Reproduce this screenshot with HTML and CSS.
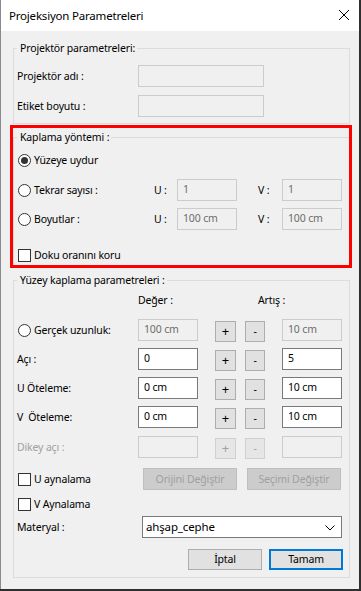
FILE: index.html
```html
<!DOCTYPE html>
<html lang="tr">
<head>
    <meta charset="UTF-8">
    <meta name="viewport" content="width=device-width, initial-scale=1.0">
    <title>Projeksiyon Parametreleri</title>
    <link rel="stylesheet" href="styles.css">
</head>
<body>
    <div class="window">
        <div class="titlebar">
            <span class="title">Projeksiyon Parametreleri</span>
            <svg class="close" width="12" height="12" viewBox="0 0 12 12">
                <path d="M1 1 L11 11 M11 1 L1 11" stroke="#000" stroke-width="1" fill="none"/>
            </svg>
        </div>

        <div class="dialog-body">
            <fieldset class="group group-projector">
                <legend>Projektör parametreleri:</legend>
                <div class="row">
                    <span class="lbl">Projektör adı :</span>
                    <span class="field field-wide disabled"></span>
                </div>
                <div class="row row-second">
                    <span class="lbl">Etiket boyutu :</span>
                    <span class="field field-wide disabled"></span>
                </div>
            </fieldset>

            <fieldset class="group group-method">
                <legend>Kaplama yöntemi :</legend>
                <div class="opt opt-first">
                    <span class="radio checked"></span>
                    <span>Yüzeye uydur</span>
                </div>
                <div class="uv-row uv-first">
                    <div class="opt">
                        <span class="radio"></span>
                        <span>Tekrar sayısı :</span>
                    </div>
                    <span>U :</span>
                    <span class="field disabled">1</span>
                    <span></span>
                    <span>V :</span>
                    <span class="field disabled">1</span>
                </div>
                <div class="uv-row">
                    <div class="opt">
                        <span class="radio"></span>
                        <span>Boyutlar :</span>
                    </div>
                    <span>U :</span>
                    <span class="field disabled">100 cm</span>
                    <span></span>
                    <span>V :</span>
                    <span class="field disabled">100 cm</span>
                </div>
                <div class="opt opt-keep">
                    <span class="check"></span>
                    <span>Doku oranını koru</span>
                </div>
            </fieldset>

            <fieldset class="group group-surface">
                <legend>Yüzey kaplama parametreleri :</legend>
                <div class="head-row">
                    <span class="head-value">Değer :</span>
                    <span class="head-step">Artış :</span>
                </div>

                <div class="row param-row param-first">
                    <div class="opt lbl">
                        <span class="radio"></span>
                        <span>Gerçek uzunluk:</span>
                    </div>
                    <span class="field field-val disabled">100 cm</span>
                    <span class="btn btn-plus">+</span>
                    <span class="btn btn-minus">-</span>
                    <span class="field field-step disabled">10 cm</span>
                </div>
                <div class="row param-row">
                    <span class="lbl">Açı :</span>
                    <span class="field field-val">0</span>
                    <span class="btn btn-plus">+</span>
                    <span class="btn btn-minus">-</span>
                    <span class="field field-step">5</span>
                </div>
                <div class="row param-row">
                    <span class="lbl">U Öteleme:</span>
                    <span class="field field-val">0 cm</span>
                    <span class="btn btn-plus">+</span>
                    <span class="btn btn-minus">-</span>
                    <span class="field field-step">10 cm</span>
                </div>
                <div class="row param-row">
                    <span class="lbl">V&nbsp; Öteleme:</span>
                    <span class="field field-val">0 cm</span>
                    <span class="btn btn-plus">+</span>
                    <span class="btn btn-minus">-</span>
                    <span class="field field-step">10 cm</span>
                </div>
                <div class="row param-row param-last">
                    <span class="lbl muted">Dikey açı :</span>
                    <span class="field field-val disabled"></span>
                    <span class="btn btn-plus off">+</span>
                    <span class="btn btn-minus off">-</span>
                    <span class="field field-step disabled"></span>
                </div>

                <div class="row mirror-row">
                    <div class="opt mirror-opt">
                        <span class="check"></span>
                        <span>U aynalama</span>
                    </div>
                    <span class="btn btn-wide off">Orijini Değiştir</span>
                    <span class="btn btn-wide off btn-gap">Seçimi Değiştir</span>
                </div>
                <div class="opt opt-v">
                    <span class="check"></span>
                    <span>V Aynalama</span>
                </div>
                <div class="row material-row">
                    <span class="lbl-mat">Materyal :</span>
                    <span class="combo">
                        <span>ahşap_cephe</span>
                        <svg width="10" height="6" viewBox="0 0 10 6">
                            <path d="M0.5 0.5 L5 5 L9.5 0.5" stroke="#000" stroke-width="1" fill="none"/>
                        </svg>
                    </span>
                </div>
                <div class="actions">
                    <span class="btn btn-action">İptal</span>
                    <span class="btn btn-action default">Tamam</span>
                </div>
            </fieldset>
        </div>

        <div class="highlight"></div>
    </div>
</body>
</html>
```

FILE: styles.css
```css
body {
    margin: 0;
    background-color: #2f2f2f;
    font-family: "Noto Sans", "Open Sans", sans-serif;
    font-size: 10.5px;
    letter-spacing: -0.15px;
    color: #000;
}
.window {
    position: relative;
    width: 358px;
    height: 589px;
    background-color: #f0f0f0;
    border-left: 1px solid #8a8a8a;
}
.titlebar {
    height: 31px;
    background: #fff;
    display: flex;
    align-items: center;
    justify-content: space-between;
    padding: 0 9px 0 8px;
}
.title {
    font-size: 11.5px;
    letter-spacing: -0.2px;
    line-height: 16px;
}
.close {
    display: block;
    margin-top: -1px;
}
.dialog-body {
    padding: 9px 9px 0 12px;
}
.group {
    margin: 0;
    padding: 0 3px 5px 3px;
    border: 1px solid #dcdcdc;
    min-width: 0;
}
.group legend {
    padding: 0 2px 0 3px;
    line-height: 16px;
}
.group-projector {
    padding-top: 9px;
    padding-bottom: 6px;
}
.group-method {
    margin-top: 5px;
    padding-top: 7px;
    padding-bottom: 2px;
}
.group-surface {
    margin-top: 6px;
    padding-top: 4px;
    padding-bottom: 7px;
}
.row {
    display: flex;
    align-items: center;
    height: 22px;
}
.row-second {
    margin-top: 8px;
}
.lbl {
    width: 121px;
    flex: none;
}
.muted {
    color: #a0a0a0;
}
.field {
    box-sizing: border-box;
    display: flex;
    align-items: center;
    height: 22px;
    padding: 0 5px 3px 5px;
    background: #fff;
    border: 1px solid #7a7a7a;
    flex: none;
}
.field.disabled {
    background: #f0f0f0;
    border-color: #cccccc;
    color: #6d6d6d;
}
.field-wide {
    width: 126px;
}

/* radio buttons and check boxes */
.opt {
    display: flex;
    align-items: center;
    gap: 3px;
    height: 16px;
}
.radio,
.check {
    box-sizing: border-box;
    flex: none;
    width: 13px;
    height: 13px;
    margin-left: 1px;
    background: #fff;
    border: 1px solid #333;
}
.radio {
    border-radius: 50%;
    display: flex;
    align-items: center;
    justify-content: center;
}
.radio.checked::after {
    content: "";
    width: 7px;
    height: 7px;
    border-radius: 50%;
    background: #333;
}
.uv-row {
    display: grid;
    grid-template-columns: 137px 23px 60px 21px 24px 60px;
    align-items: center;
    height: 22px;
    margin-top: 7px;
}
.uv-first {
    margin-top: 11px;
}
.uv-row .field {
    width: 60px;
}
.opt-keep {
    margin-top: 17px;
}

/* surface parameters */
.head-row {
    display: flex;
    height: 16px;
    align-items: center;
}
.head-value {
    margin-left: 121px;
    width: 120px;
}
.param-row {
    margin-top: 7px;
}
.param-first {
    margin-top: 11px;
}
.param-last {
    margin-top: 8px;
}
.field-val,
.field-step {
    width: 60px;
}
.btn {
    box-sizing: border-box;
    display: flex;
    align-items: center;
    justify-content: center;
    height: 21px;
    background: #e1e1e1;
    border: 1px solid #adadad;
    flex: none;
    padding-bottom: 1px;
}
.btn.off {
    background: #cccccc;
    border-color: #bfbfbf;
    color: #a0a0a0;
}
.param-row .btn.off {
    background: #e6e6e6;
    border-color: #d0d0d0;
}
.btn-plus {
    width: 21px;
    margin-left: 17px;
    margin-top: 2px;
    font-size: 13px;
}
.btn-minus {
    width: 20px;
    margin-left: 9px;
    margin-top: 2px;
}
.field-step {
    margin-left: 17px;
}
.mirror-row {
    margin-top: 10px;
}
.mirror-opt {
    width: 126px;
}
.btn-wide {
    width: 94px;
    height: 22px;
}
.btn-gap {
    margin-left: 10px;
}
.opt-v {
    margin-top: 6px;
}
.material-row {
    margin-top: 4px;
}
.lbl-mat {
    width: 125px;
    flex: none;
}
.combo {
    box-sizing: border-box;
    width: 200px;
    height: 22px;
    display: flex;
    align-items: center;
    justify-content: space-between;
    padding: 0 6px 1px 3px;
    background: #fff;
    border: 1px solid #7a7a7a;
    font-size: 11.5px;
}
.combo svg {
    display: block;
    margin-top: 2px;
}
.actions {
    display: flex;
    justify-content: flex-end;
    gap: 7px;
    margin-top: 11px;
    margin-right: 3px;
}
.btn-action {
    width: 74px;
}
.btn-action.default {
    border: 2px solid #0078d7;
}

/* annotation frame drawn over the "Kaplama yöntemi" group */
.highlight {
    position: absolute;
    left: 9px;
    top: 125px;
    width: 342px;
    height: 143px;
    box-sizing: border-box;
    border: 3px solid #ff0000;
    pointer-events: none;
}
```
